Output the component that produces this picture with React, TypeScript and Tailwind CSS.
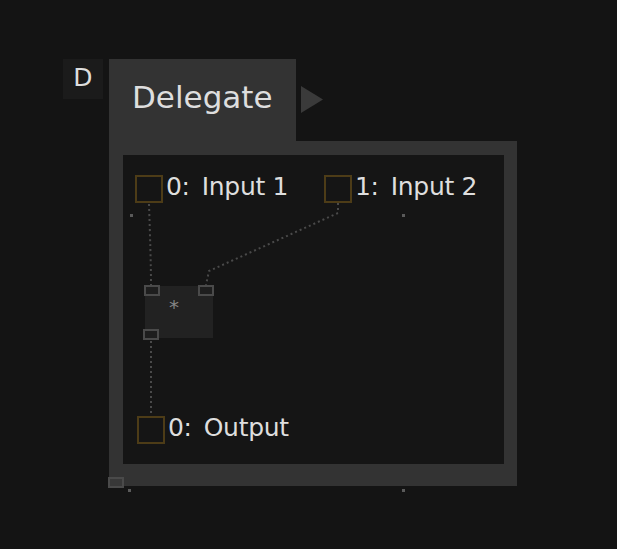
import React from "react";

const font = { fontFamily: '"DejaVu Sans", sans-serif' };

function Port({ index, label }: { index: string; label: string }) {
  return (
    <div className="flex items-start">
      <div className="mt-[3px] h-[28px] w-[28px] border-2 border-[#4d3c17] bg-[#151515]" />
      <span className="ml-[3px] text-[25px] leading-[29px] tracking-[-0.3px] text-[#dedede]">{index}</span>
      <span className="ml-[12px] text-[25px] leading-[29px] tracking-[-0.3px] text-[#dedede]">{label}</span>
    </div>
  );
}

function MiniPort({ className }: { className: string }) {
  return <div className={"absolute h-[11px] w-[16px] border-2 border-[#4a4a4a] bg-[#1e1e1e] " + className} />;
}

function Dot({ className }: { className: string }) {
  return <div className={"absolute h-[3px] w-[3px] bg-[#5a5a5a] " + className} />;
}

export default function App() {
  return (
    <div className="relative h-[549px] w-full overflow-hidden bg-[#141414]" style={font}>
      <div className="absolute left-[63px] top-[59px] flex gap-[6px]">
        <div className="flex h-[40px] w-[40px] items-start justify-center bg-[#1b1b1b] pt-[4px] text-[25px] leading-[29px] text-[#dedede]">
          D
        </div>
        <div className="flex flex-col">
          <div className="flex items-start">
            <div className="h-[82px] w-[187px] bg-[#333333] pl-[23px] pt-[20px] text-[31px] leading-[36px] text-[#dedede]">
              Delegate
            </div>
            <svg className="ml-[5px] mt-[27px]" width="22" height="27" viewBox="0 0 22 27">
              <polygon points="0,0 22,13.5 0,27" fill="#3a3a3a" />
            </svg>
          </div>
          <div className="h-[345px] w-[408px] bg-[#333333] pb-[22px] pl-[14px] pr-[13px] pt-[14px]">
            <div className="relative flex h-full w-full flex-col bg-[#151515] pb-[20px] pl-[12px] pt-[17px]">
              <svg className="absolute left-0 top-0" width="381" height="309">
                <g stroke="#4a4a4a" strokeWidth="2" fill="none" strokeDasharray="2 3">
                  <path d="M26 49 C27 80 28 110 28 130" />
                  <path d="M215 48 L215 58 L86 116 L83 130" />
                  <path d="M28 186 L28 261" />
                </g>
              </svg>
              <div className="relative grid grid-cols-[189px_auto]">
                <Port index="0:" label="Input 1" />
                <Port index="1:" label="Input 2" />
              </div>
              <div className="relative ml-[2px] mt-auto">
                <Port index="0:" label="Output" />
              </div>
              <Dot className="left-[7px] top-[59px]" />
              <Dot className="left-[279px] top-[59px]" />
              <div className="absolute left-[22px] top-[131px] flex h-[52px] w-[68px] justify-center bg-[#222222] pr-[10px] pt-[10px] text-[20px] leading-[22px] text-[#858585]">
                *
              </div>
              <MiniPort className="left-[21px] top-[130px]" />
              <MiniPort className="left-[75px] top-[130px]" />
              <MiniPort className="left-[20px] top-[174px]" />
            </div>
          </div>
        </div>
      </div>
      <div className="absolute left-[108px] top-[477px] h-[11px] w-[16px] border-2 border-[#4a4a4a] bg-[#383838]" />
      <Dot className="left-[128px] top-[489px]" />
      <Dot className="left-[402px] top-[489px]" />
    </div>
  );
}
